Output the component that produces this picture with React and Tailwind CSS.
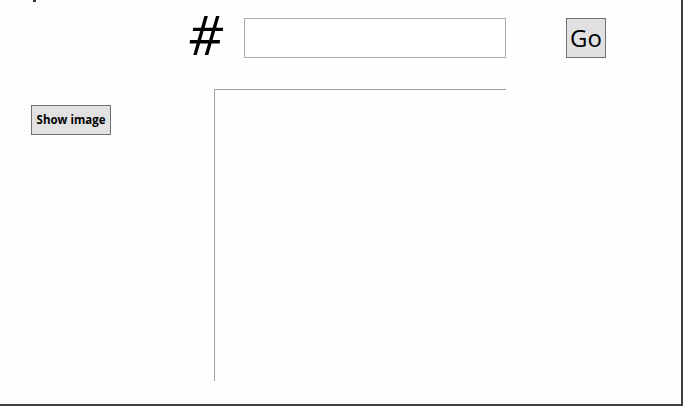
import React from 'react';

const font = { fontFamily: '"Open Sans", "Noto Sans", sans-serif' };

export default function App() {
  return (
    <div
      className="w-[683px] h-[406px] bg-[#fefefe] border-r-2 border-b-2 border-[#3b4036] flex flex-col text-black"
      style={font}
    >
      {/* clipped glyph bit at the very top */}
      <div className="ml-[33px] w-[3px] h-[2px] bg-[#333]" />

      <div className="mt-[16px] flex items-start h-[40px]">
        <div className="ml-[188px] w-[56px] h-[40px] flex items-center leading-none text-[54px] italic">
          <span className="-translate-y-1">#</span>
        </div>
        <input
          type="text"
          className="w-[262px] h-[40px] border border-[#abadb3] bg-white outline-none px-1"
        />
        <button className="ml-[60px] w-[40px] h-[40px] border border-[#707070] bg-[#e1e1e1] text-[24px] leading-none flex items-center justify-center">
          Go
        </button>
      </div>

      <div className="mt-[31px] flex items-start">
        <div className="w-[214px] pl-[31px] pt-[16px]">
          <button className="w-[80px] h-[30px] border border-[#707070] bg-[#e1e1e1] text-[11.5px] font-bold leading-none flex items-center justify-center">
            Show image
          </button>
        </div>
        <div className="w-[292px] h-[292px] border-t border-l border-[#a0a0a0]" />
      </div>
    </div>
  );
}
